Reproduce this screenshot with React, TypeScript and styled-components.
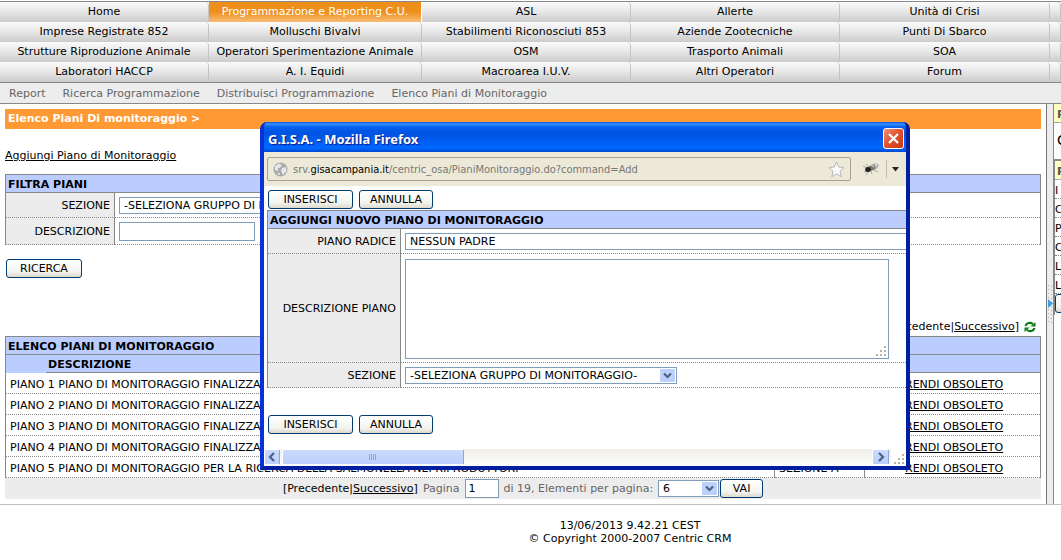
import React from "react";
import styled, { createGlobalStyle, css } from "styled-components";

const GlobalStyle = createGlobalStyle`
  * { box-sizing: border-box; }
  html, body { margin: 0; background: #fff; overflow: hidden; }
  body, button, input, select, textarea {
    font-family: Verdana, "DejaVu Sans", sans-serif;
    font-size: 11px;
    color: #000;
  }
  body { line-height: 13px; }
  a { color: inherit; }
`;

const line = "#888";
const headerBlue = "#bbcdff";
const panelGrey = "#ececec";

const Page = styled.div`
  position: relative;
  padding-top: 1px;
`;

const Modules = styled.nav`
  display: grid;
  grid-template-columns: 209fr 213fr 209fr 209fr 210fr 11fr;
  grid-auto-rows: 20px;
  border-top: 1px solid ${line};
  border-bottom: 1px solid ${line};
`;

const ModuleTab = styled.a<{ $active?: boolean }>`
  display: flex;
  align-items: center;
  justify-content: center;
  min-width: 0;
  padding-bottom: 2px;
  white-space: nowrap;
  text-decoration: none;
  border-right: 1px solid #c4c4c4;
  border-top-right-radius: 4px;
  background: linear-gradient(#fbfbfb, #e6e6e6 50%, #cbcbcb);
  ${(p) =>
    p.$active &&
    css`
      color: #fff;
      border-radius: 0;
      border-right-color: #fff;
      background: linear-gradient(#ee8f1c, #ee8f1c 50%, #f8bd78);
    `}
`;

const SubMenu = styled.nav`
  display: flex;
  align-items: center;
  gap: 17px;
  height: 21px;
  padding: 0 9px;
  color: #666;
  background: #ededed;
  border-bottom: 1px solid ${line};
  a { text-decoration: none; }
`;

const Columns = styled.div`
  display: flex;
  border-bottom: 1px solid #bfbfc8;
`;

const Main = styled.main`
  flex: 1;
  min-width: 0;
  padding: 5px;
  border-right: 1px solid #777;
`;

const Breadcrumb = styled.h1`
  margin: 0;
  padding: 3px;
  height: 20px;
  font-size: 11px;
  line-height: 13px;
  color: #fff;
  background: #ff9933;
`;

const AddLine = styled.div`
  padding: 20px 0 12px;
`;

const Grid = styled.table`
  width: 100%;
  border-spacing: 0;
  border-top: 1px solid ${line};
  border-left: 1px solid ${line};
  border-right: 1px solid ${line};
  th, td { padding: 1px 4px 0; }
`;

const HeadCell = styled.th<{ $open?: boolean }>`
  height: 18px;
  text-align: left;
  background: ${headerBlue};
  border-bottom: 1px solid ${(p) => (p.$open ? headerBlue : line)};
  && { padding: 1px 2px 0; }
`;

const LabelCell = styled.th<{ $wide?: boolean }>`
  width: ${(p) => (p.$wide ? 133 : 109)}px;
  font-weight: normal;
  text-align: right;
  white-space: nowrap;
  background: ${panelGrey};
  border-right: 1px solid ${line};
  border-bottom: 1px dotted ${line};
`;

const FieldCell = styled.td<{ $height: number }>`
  height: ${(p) => p.$height}px;
  border-bottom: 1px dotted ${line};
`;

const Cell = styled.td<{ $ruled?: boolean; $action?: boolean }>`
  height: 21px;
  white-space: nowrap;
  border-bottom: 1px dotted ${line};
  border-right: ${(p) => (p.$ruled ? `1px solid ${line}` : "none")};
  && {
    padding-top: 2px;
    padding-left: ${(p) => (p.$action ? 40 : 4)}px;
  }
`;

const Button = styled.button<{ $width: number }>`
  width: ${(p) => p.$width}px;
  height: 19px;
  padding: 0;
  line-height: 15px;
  border: 1px solid #003c74;
  border-radius: 3px;
  background: linear-gradient(#fff, #f3f3ef 70%, #dcd8cd);
`;

const TextInput = styled.input<{ $width: number }>`
  width: ${(p) => p.$width}px;
  height: 19px;
  padding: 0 3px;
  vertical-align: middle;
  background: #fff;
  border: 1px solid #7f9db9;
`;

const SelectBox = styled.span<{ $width: number }>`
  position: relative;
  display: inline-block;
  vertical-align: middle;
  width: ${(p) => p.$width}px;
  height: 17px;
  select {
    appearance: none;
    display: block;
    width: 100%;
    height: 100%;
    padding: 0 4px;
    background: #fff;
    border: 1px solid #7f9db9;
    border-radius: 0;
  }
  svg {
    position: absolute;
    top: 2px;
    right: 2px;
    pointer-events: none;
  }
`;

function Select(p: { id: string; width: number; options: string[] }) {
  return (
    <SelectBox $width={p.width}>
      <select id={p.id}>
        {p.options.map((o) => (
          <option key={o}>{o}</option>
        ))}
      </select>
      <svg width="15" height="13" viewBox="0 0 15 13">
        <rect width="15" height="13" rx="1" fill="#bdd0fb" />
        <path d="M4 4.5 7.5 8 11 4.5" fill="none" stroke="#4d6185" strokeWidth="2.2" />
      </svg>
    </SelectBox>
  );
}

const SearchLine = styled.div`
  display: flex;
  padding: 14px 1px 42px;
`;

const TopPager = styled.div`
  display: flex;
  align-items: center;
  justify-content: flex-end;
  gap: 5px;
  height: 13px;
  margin-bottom: 3px;
  padding-right: 5px;
`;

const BottomPager = styled.div`
  display: flex;
  align-items: center;
  justify-content: center;
  gap: 5px;
  height: 21px;
  color: #666;
  background: ${panelGrey};
`;

const GoGroup = styled.span`
  display: flex;
  align-items: center;
  gap: 1px;
`;

const PageLinksText = styled.span`
  color: #000;
`;

const Splitter = styled.div`
  display: flex;
  flex: 0 0 6px;
  align-items: center;
  background: #ededed;
`;

const Side = styled.aside`
  flex: 0 0 8px;
  overflow: hidden;
  border-left: 1px solid ${line};
`;

const SideTitle = styled.div`
  height: 19px;
  padding: 4px 3px 0;
  font-weight: bold;
  color: #555;
  background: #ffffc4;
  border-bottom: 1px solid #aaa;
`;

const SideText = styled.div`
  height: 37px;
  padding: 11px 3px;
  font-size: 14px;
  border-bottom: 1px solid ${line};
`;

const SideList = styled.div`
  border-left: 1px solid ${line};
  border-top: 1px solid ${line};
  ${SideTitle} { padding-left: 2px; }
`;

const SideRow = styled.div`
  height: 19px;
  padding: 4px 0 0;
  border-bottom: 1px dotted ${line};
`;

const Footer = styled.footer`
  padding: 14px 0 0 199px;
  text-align: center;
`;

const Window = styled.section`
  position: absolute;
  left: 260px;
  top: 122px;
  width: 650px;
  height: 348px;
  display: flex;
  flex-direction: column;
  border: 4px solid #0831d9;
  border-color: #0a50e8 #001ea0 #001ea0 #0831d9;
  border-top: 0;
  border-radius: 7px 7px 0 0;
  background: #0855dd;
  overflow: hidden;
  box-shadow: inset 0 0 0 1px #0845e8;
`;

const TitleBar = styled.header`
  display: flex;
  align-items: center;
  justify-content: space-between;
  flex: 0 0 30px;
  padding: 3px 2px 0 4px;
  font: bold 13px/18px "Trebuchet MS", "Noto Sans", sans-serif;
  color: #fff;
  text-shadow: 1px 1px 1px #0a1883;
  background: linear-gradient(#0a50d8, #3a93ff 2px, #0560f0 5px, #0053e0 11px, #005ff5 20px, #0068ff 26px, #0048d0);
`;

const CloseButton = styled.button`
  display: flex;
  align-items: center;
  justify-content: center;
  width: 21px;
  height: 21px;
  padding: 0;
  border: 1px solid #fff;
  border-radius: 3px;
  background: linear-gradient(135deg, #ee9278, #e0502c 50%, #c83810);
`;

const Toolbar = styled.div`
  display: flex;
  align-items: center;
  flex: 0 0 34px;
  padding: 0 7px 0 3px;
  background: #ece9d8;
`;

const Address = styled.div`
  display: flex;
  align-items: center;
  flex: 1;
  gap: 5px;
  height: 24px;
  padding: 0 5px;
  color: #777;
  font-family: "DejaVu Sans Condensed", Tahoma, sans-serif;
  border: 1px solid #a5a294;
  border-radius: 2px;
  span { flex: 1; white-space: nowrap; }
  b { font-weight: normal; color: #000; }
`;

const ToolDivider = styled.i`
  width: 1px;
  height: 18px;
  margin: 0 5px 0 4px;
  background: #c2bfb0;
`;

const WindowBody = styled.div`
  flex: 1;
  min-height: 0;
  overflow: hidden;
  padding: 4px 0 0 3px;
  background: #fff;
`;

const Actions = styled.div`
  display: flex;
  gap: 6px;
  padding: 0 1px 1px;
`;

const Form = styled.form`
  width: 160%;
  ${Grid} { margin-bottom: 27px; }
`;

const Area = styled.textarea`
  display: block;
  width: 100%;
  height: 100px;
  resize: none;
  border: 1px solid #7f9db9;
`;

const AreaBox = styled.div`
  position: relative;
  width: 484px;
  svg { position: absolute; right: 3px; bottom: 3px; }
`;

const ScrollBar = styled.div`
  display: flex;
  flex: 0 0 17px;
  justify-content: space-between;
  background: linear-gradient(#efeee6, #fefefb);
`;

const ScrollGroup = styled.div`
  display: flex;
  gap: 2px;
`;

const ScrollPart = styled.button<{ $width: number }>`
  display: flex;
  align-items: center;
  justify-content: center;
  width: ${(p) => p.$width}px;
  height: 16px;
  padding: 0;
  border: 1px solid #fff;
  border-right-color: #88a5dc;
  border-radius: 2px;
  background: linear-gradient(#cbdafd, #bccffc);
`;

const SizeCorner = styled.span`
  display: flex;
  align-items: flex-end;
  width: 15px;
  padding: 0 0 2px 3px;
  background: #fff;
`;

function Grip() {
  const dots = [[8, 0], [4, 4], [8, 4], [0, 8], [4, 8], [8, 8]];
  return (
    <svg width="10" height="10">
      {dots.map(([x, y]) => (
        <rect key={`${x}-${y}`} x={x} y={y} width="2" height="2" fill="#b8b4a2" />
      ))}
    </svg>
  );
}

function Arrow({ right }: { right?: boolean }) {
  return (
    <svg width="8" height="10" viewBox="0 0 8 10">
      <path d={right ? "M2 1 6 5 2 9" : "M6 1 2 5 6 9"} fill="none" stroke="#4d6185" strokeWidth="2.2" />
    </svg>
  );
}

const modules = [
  "Home", "Programmazione e Reporting C.U.", "ASL", "Allerte", "Unità di Crisi", "",
  "Imprese Registrate 852", "Molluschi Bivalvi", "Stabilimenti Riconosciuti 853", "Aziende Zootecniche", "Punti Di Sbarco", "",
  "Strutture Riproduzione Animale", "Operatori Sperimentazione Animale", "OSM", "Trasporto Animali", "SOA", "",
  "Laboratori HACCP", "A. I. Equidi", "Macroarea I.U.V.", "Altri Operatori", "Forum", "",
];

const subMenu = [
  "Report",
  "Ricerca Programmazione",
  "Distribuisci Programmazione",
  "Elenco Piani di Monitoraggio",
];

const plans = [
  "PIANO 1 PIANO DI MONITORAGGIO FINALIZZATO",
  "PIANO 2 PIANO DI MONITORAGGIO FINALIZZATO",
  "PIANO 3 PIANO DI MONITORAGGIO FINALIZZATO",
  "PIANO 4 PIANO DI MONITORAGGIO FINALIZZATO",
  "PIANO 5 PIANO DI MONITORAGGIO PER LA RICERCA DELLA SALMONELLA NEI RIPRODUTTORI",
];

const groupOption = "-SELEZIONA GRUPPO DI MONITORAGGIO-";

function PageLinks() {
  return (
    <PageLinksText>
      [Precedente|<a href="#next">Successivo</a>]
    </PageLinksText>
  );
}

function FormActions() {
  return (
    <Actions>
      <Button type="button" $width={85}>INSERISCI</Button>
      <Button type="button" $width={74}>ANNULLA</Button>
    </Actions>
  );
}

function Popup() {
  return (
    <Window>
      <TitleBar>
        G.I.S.A. - Mozilla Firefox
        <CloseButton aria-label="Chiudi">
          <svg width="13" height="13" viewBox="0 0 13 13">
            <path d="M2 2 11 11M11 2 2 11" stroke="#fff" strokeWidth="2.2" />
          </svg>
        </CloseButton>
      </TitleBar>
      <Toolbar>
        <Address>
          <svg width="15" height="15" viewBox="0 0 15 15">
            <circle cx="7.5" cy="7.5" r="7" fill="#aaa" />
            <path d="M2 4 6 1.5 9 3 7 6 5 6 5 9 2 8ZM9 6 13 5 13.5 9 10 13 8 9ZM4 11 7 11 6.5 13.5Z" fill="#e6e6e6" />
          </svg>
          <span>srv.<b>gisacampania.it</b>/centric_osa/PianiMonitoraggio.do?command=Add</span>
          <svg width="17" height="17" viewBox="0 0 17 17">
            <path d="M8.500 1 10.700 6 16 6.500 12 10.200 13.200 15.800 8.500 12.800 3.800 15.800 5 10.200 1 6.500 6.300 6Z" fill="#fbfbfb" stroke="#b5b5b5" strokeLinejoin="round" />
          </svg>
        </Address>
        <svg width="31" height="16" viewBox="0 0 31 16">
          <path d="M12 5 16 7M13 11 17 10M15 14 18 10M20 10 21 13M23 9 27 11M24 5 28 4M17 6 15 3" stroke="#aaa9a0" />
          <ellipse cx="23" cy="5.500" rx="4.500" ry="3" transform="rotate(-20 23 5.500)" fill="#b4b4b4" />
          <ellipse cx="20.500" cy="7" rx="4" ry="2.600" transform="rotate(-20 20.500 7)" fill="#777" />
          <ellipse cx="17" cy="8.500" rx="2.800" ry="2.500" fill="#222" />
          <path d="M20 4 23 6M24 3 26 5" stroke="#eee" />
        </svg>
        <ToolDivider />
        <svg width="7" height="5" viewBox="0 0 7 5">
          <path d="M0 0H7L3.500 4.500Z" fill="#222" />
        </svg>
      </Toolbar>
      <WindowBody>
        <Form>
          <FormActions />
          <Grid>
            <tbody>
              <tr>
                <HeadCell colSpan={2}>AGGIUNGI NUOVO PIANO DI MONITORAGGIO</HeadCell>
              </tr>
              <tr>
                <LabelCell $wide><label htmlFor="padre">PIANO RADICE</label></LabelCell>
                <FieldCell $height={25}><Select id="padre" width={800} options={["NESSUN PADRE"]} /></FieldCell>
              </tr>
              <tr>
                <LabelCell $wide><label htmlFor="piano">DESCRIZIONE PIANO</label></LabelCell>
                <FieldCell $height={109}>
                  <AreaBox><Area id="piano" /><Grip /></AreaBox>
                </FieldCell>
              </tr>
              <tr>
                <LabelCell $wide><label htmlFor="gruppo">SEZIONE</label></LabelCell>
                <FieldCell $height={25}><Select id="gruppo" width={272} options={[groupOption]} /></FieldCell>
              </tr>
            </tbody>
          </Grid>
          <FormActions />
        </Form>
      </WindowBody>
      <ScrollBar>
        <ScrollGroup>
          <ScrollPart $width={16} aria-label="Sinistra"><Arrow /></ScrollPart>
          <ScrollPart $width={182} aria-label="Scorri">
            <svg width="8" height="6"><path d="M.5 0V6M2.500 0V6M4.500 0V6M6.500 0V6" stroke="#86a4e8" /></svg>
          </ScrollPart>
        </ScrollGroup>
        <ScrollGroup>
          <ScrollPart $width={17} aria-label="Destra"><Arrow right /></ScrollPart>
          <SizeCorner><Grip /></SizeCorner>
        </ScrollGroup>
      </ScrollBar>
    </Window>
  );
}

export default function App() {
  return (
    <Page>
      <GlobalStyle />
      <Modules>
        {modules.map((name, i) => (
          <ModuleTab key={i} href="#module" $active={i === 1}>{name}</ModuleTab>
        ))}
      </Modules>
      <SubMenu>
        {subMenu.map((t) => (
          <a key={t} href="#sub">{t}</a>
        ))}
      </SubMenu>
      <Columns>
        <Main>
          <Breadcrumb>Elenco Piani Di monitoraggio &gt;</Breadcrumb>
          <AddLine><a href="#add">Aggiungi Piano di Monitoraggio</a></AddLine>
          <Grid>
            <tbody>
              <tr><HeadCell colSpan={2}>FILTRA PIANI</HeadCell></tr>
              <tr>
                <LabelCell><label htmlFor="sezione">SEZIONE</label></LabelCell>
                <FieldCell $height={25}><Select id="sezione" width={272} options={[groupOption]} /></FieldCell>
              </tr>
              <tr>
                <LabelCell><label htmlFor="descrizione">DESCRIZIONE</label></LabelCell>
                <FieldCell $height={27}><TextInput id="descrizione" $width={136} /></FieldCell>
              </tr>
            </tbody>
          </Grid>
          <SearchLine><Button $width={76}>RICERCA</Button></SearchLine>
          <TopPager>
            <PageLinks />
            <svg width="12" height="12" viewBox="0 0 12 12">
              <path d="M1.500 5A4.500 4 0 0 1 9 3M10.500 7A4.500 4 0 0 1 3 9" fill="none" stroke="#0b7d12" strokeWidth="2.2" />
              <path d="M11.500 1V5.500H6.500ZM.5 11V6.500H5.500Z" fill="#0b7d12" />
            </svg>
          </TopPager>
          <Grid>
            <colgroup>
              <col width="40" />
              <col />
              <col width="90" />
              <col width="175" />
            </colgroup>
            <thead>
              <tr><HeadCell colSpan={4}>ELENCO PIANI DI MONITORAGGIO</HeadCell></tr>
              <tr>
                <HeadCell $open />
                <HeadCell>DESCRIZIONE</HeadCell>
                <HeadCell colSpan={2} />
              </tr>
            </thead>
            <tbody>
              {plans.map((plan) => (
                <tr key={plan}>
                  <Cell colSpan={2} $ruled>{plan}</Cell>
                  <Cell $ruled>SEZIONE A</Cell>
                  <Cell $action><a href="#obsoleto">RENDI OBSOLETO</a></Cell>
                </tr>
              ))}
            </tbody>
          </Grid>
          <BottomPager>
            <PageLinks />
            <label htmlFor="pagina">Pagina</label>
            <TextInput id="pagina" $width={34} defaultValue="1" />
            <label htmlFor="elementi">di 19, Elementi per pagina:</label>
            <GoGroup>
              <Select id="elementi" width={61} options={["6"]} />
              <Button $width={43}>VAI</Button>
            </GoGroup>
          </BottomPager>
        </Main>
        <Splitter>
          <svg width="6" height="40" viewBox="0 0 6 40">
            <path d="M1.500 1V40M4.500 2V40" stroke="#aaa" strokeDasharray="1 3" />
            <path d="M1 15 6 19.500 1 24Z" fill="#3f9fe0" />
          </svg>
        </Splitter>
        <Side>
          <SideTitle>P</SideTitle>
          <SideText>C</SideText>
          <SideList>
            <SideTitle>P</SideTitle>
            {["I", "C", "P", "C", "L", "L"].map((t, i) => (
              <SideRow key={i}>{t}</SideRow>
            ))}
            <Button $width={60} aria-label="Vai" />
          </SideList>
        </Side>
      </Columns>
      <Footer>
        13/06/2013 9.42.21 CEST<br />
        © Copyright 2000-2007 Centric CRM
      </Footer>
      <Popup />
    </Page>
  );
}
